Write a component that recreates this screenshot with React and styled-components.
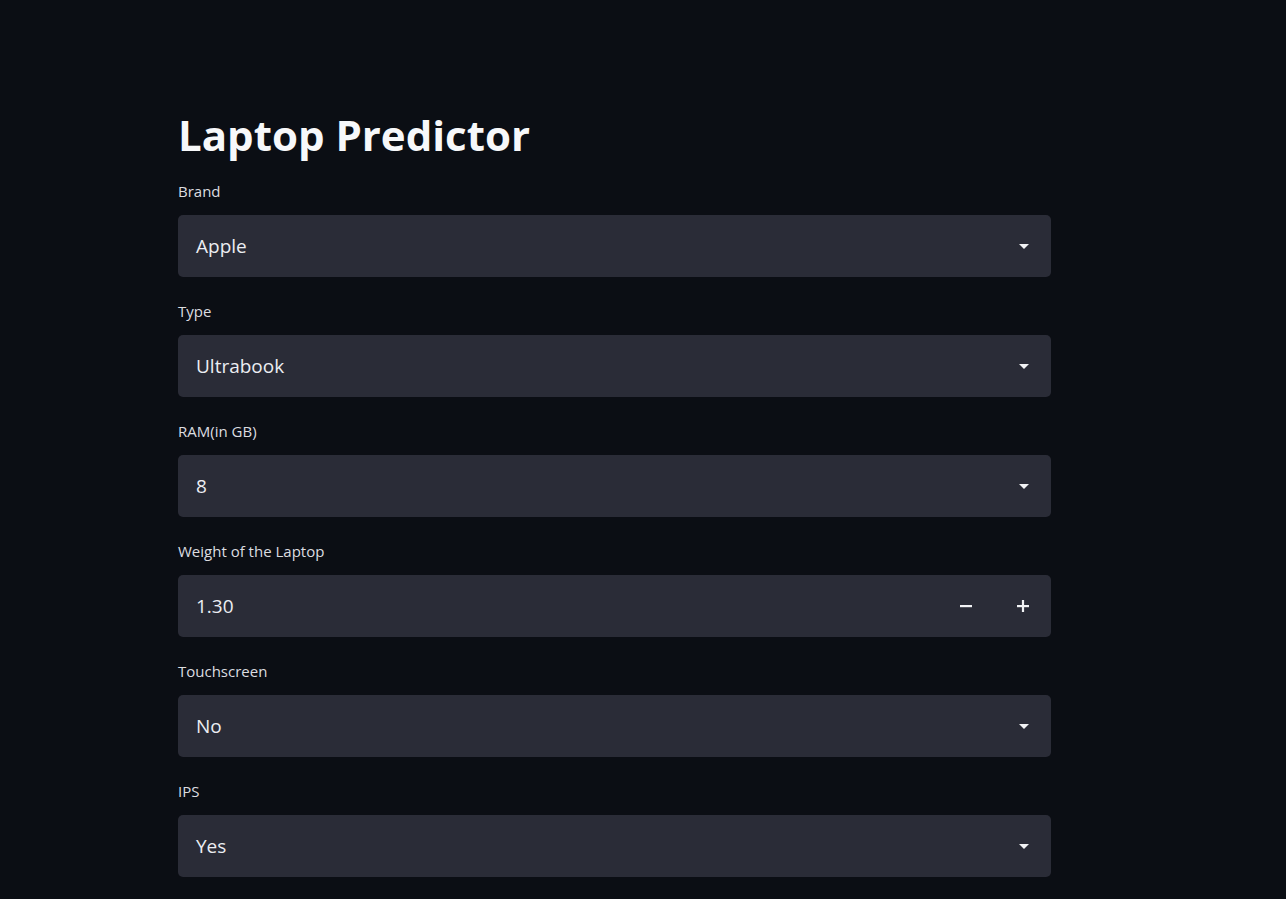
import React from "react";
import styled, { createGlobalStyle } from "styled-components";

const GlobalStyle = createGlobalStyle`
    html, body {
        margin: 0;
        padding: 0;
        background-color: #0b0e14;
        font-family: "Open Sans", "Noto Sans", sans-serif;
        color: #fafafa;
    }
`;

const Page = styled.div`
    min-height: 899px;
    background-color: #0b0e14;
    padding: 110px 0 40px 178px;
    box-sizing: border-box;
`;

const Main = styled.div`
    width: 873px;
    display: flex;
    flex-direction: column;
    gap: 23px;
`;

const Title = styled.h1`
    margin: -1px 0 -4px 0;
    font-size: 42px;
    font-weight: 700;
    line-height: 52px;
    color: #f7f8fa;
`;

const Field = styled.div`
    display: flex;
    flex-direction: column;
    gap: 13px;
`;

const Label = styled.label`
    font-size: 15px;
    line-height: 22px;
    color: #dcdde0;
`;

const Box = styled.div`
    height: 62px;
    border-radius: 5px;
    background-color: #2a2c37;
    display: flex;
    align-items: center;
    padding: 0 ${(p) => (p.$number ? "8px" : "22px")} 0 18px;
    box-sizing: border-box;
`;

const Value = styled.span`
    flex: 1;
    font-size: 19px;
    color: #eceef2;
`;

const Caret = styled.span`
    width: 0;
    height: 0;
    border-left: 5px solid transparent;
    border-right: 5px solid transparent;
    border-top: 5px solid #f2f3f5;
`;

const StepButton = styled.button`
    width: 40px;
    height: 40px;
    margin-left: 17px;
    border: none;
    background: transparent;
    color: #f2f3f5;
    display: flex;
    align-items: center;
    justify-content: center;
    cursor: pointer;
    padding: 0;
`;

const Minus = () => (
    <svg width="12" height="12" viewBox="0 0 12 12">
        <rect x="0" y="5" width="12" height="2.2" fill="currentColor" />
    </svg>
);

const Plus = () => (
    <svg width="12" height="12" viewBox="0 0 12 12">
        <rect x="0" y="5" width="12" height="2.2" fill="currentColor" />
        <rect x="4.9" y="0" width="2.2" height="12" fill="currentColor" />
    </svg>
);

const fields = [
    { label: "Brand", value: "Apple" },
    { label: "Type", value: "Ultrabook" },
    { label: "RAM(in GB)", value: "8" },
    { label: "Weight of the Laptop", value: "1.30", number: true },
    { label: "Touchscreen", value: "No" },
    { label: "IPS", value: "Yes" },
];

const App = () => {
    return (
        <>
            <GlobalStyle />
            <Page>
                <Main>
                    <Title>Laptop Predictor</Title>
                    {fields.map((f) => (
                        <Field key={f.label}>
                            <Label>{f.label}</Label>
                            <Box $number={f.number}>
                                <Value>{f.value}</Value>
                                {f.number ? (
                                    <>
                                        <StepButton><Minus /></StepButton>
                                        <StepButton><Plus /></StepButton>
                                    </>
                                ) : (
                                    <Caret />
                                )}
                            </Box>
                        </Field>
                    ))}
                </Main>
            </Page>
        </>
    );
};

export default App;
